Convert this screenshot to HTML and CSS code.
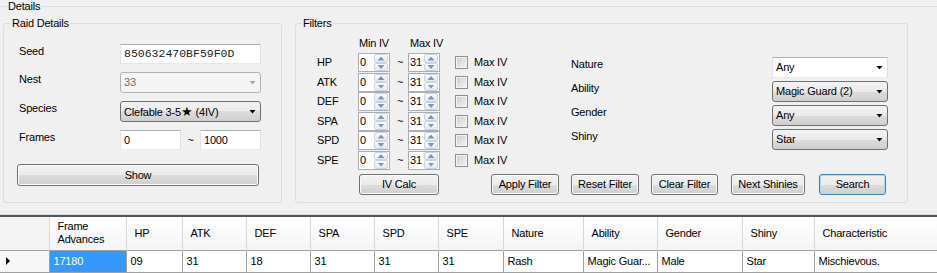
FILE: index.html
```html
<!DOCTYPE html>
<html lang="en">
<head>
    <meta charset="UTF-8">
    <meta name="viewport" content="width=device-width, initial-scale=1.0">
    <title>Raid Generator</title>
    <link rel="stylesheet" href="styles.css">
</head>
<body>
    <fieldset class="group details">
        <legend>Details</legend>
        <div class="details-body">
            <fieldset class="group raid">
                <legend>Raid Details</legend>
                <div class="raid-body">
                    <div class="field">
                        <span class="field-label">Seed</span>
                        <div class="textbox seed">850632470BF59F0D</div>
                    </div>
                    <div class="field">
                        <span class="field-label">Nest</span>
                        <div class="combo disabled"><span class="combo-text">33</span></div>
                    </div>
                    <div class="field">
                        <span class="field-label">Species</span>
                        <div class="combo"><span class="combo-text">Clefable 3-5<span class="star">★</span> (4IV)</span></div>
                    </div>
                    <div class="field">
                        <span class="field-label">Frames</span>
                        <div class="textbox frame">0</div>
                        <span class="range-sep">~</span>
                        <div class="textbox frame">1000</div>
                    </div>
                    <button class="btn show">Show</button>
                </div>
            </fieldset>

            <fieldset class="group filters">
                <legend>Filters</legend>
                <div class="filters-body">
                    <div class="filters-top">
                        <div class="stats">
                            <div class="stats-head"><span>Min IV</span><span>Max IV</span></div>
                            <div class="stat-row">
                                <span class="stat-name">HP</span>
                                <div class="spin"><span class="spin-val">0</span><span class="spin-btns"><i class="up"></i><i class="down"></i></span></div>
                                <span class="tilde">~</span>
                                <div class="spin"><span class="spin-val">31</span><span class="spin-btns"><i class="up"></i><i class="down"></i></span></div>
                                <span class="check"></span><span class="check-label">Max IV</span>
                            </div>
                            <div class="stat-row">
                                <span class="stat-name">ATK</span>
                                <div class="spin"><span class="spin-val">0</span><span class="spin-btns"><i class="up"></i><i class="down"></i></span></div>
                                <span class="tilde">~</span>
                                <div class="spin"><span class="spin-val">31</span><span class="spin-btns"><i class="up"></i><i class="down"></i></span></div>
                                <span class="check"></span><span class="check-label">Max IV</span>
                            </div>
                            <div class="stat-row">
                                <span class="stat-name">DEF</span>
                                <div class="spin"><span class="spin-val">0</span><span class="spin-btns"><i class="up"></i><i class="down"></i></span></div>
                                <span class="tilde">~</span>
                                <div class="spin"><span class="spin-val">31</span><span class="spin-btns"><i class="up"></i><i class="down"></i></span></div>
                                <span class="check"></span><span class="check-label">Max IV</span>
                            </div>
                            <div class="stat-row">
                                <span class="stat-name">SPA</span>
                                <div class="spin"><span class="spin-val">0</span><span class="spin-btns"><i class="up"></i><i class="down"></i></span></div>
                                <span class="tilde">~</span>
                                <div class="spin"><span class="spin-val">31</span><span class="spin-btns"><i class="up"></i><i class="down"></i></span></div>
                                <span class="check"></span><span class="check-label">Max IV</span>
                            </div>
                            <div class="stat-row">
                                <span class="stat-name">SPD</span>
                                <div class="spin"><span class="spin-val">0</span><span class="spin-btns"><i class="up"></i><i class="down"></i></span></div>
                                <span class="tilde">~</span>
                                <div class="spin"><span class="spin-val">31</span><span class="spin-btns"><i class="up"></i><i class="down"></i></span></div>
                                <span class="check"></span><span class="check-label">Max IV</span>
                            </div>
                            <div class="stat-row">
                                <span class="stat-name">SPE</span>
                                <div class="spin"><span class="spin-val">0</span><span class="spin-btns"><i class="up"></i><i class="down"></i></span></div>
                                <span class="tilde">~</span>
                                <div class="spin"><span class="spin-val">31</span><span class="spin-btns"><i class="up"></i><i class="down"></i></span></div>
                                <span class="check"></span><span class="check-label">Max IV</span>
                            </div>
                        </div>

                        <div class="options">
                            <div class="option">
                                <span class="option-label">Nature</span>
                                <div class="combo editable"><span class="combo-text">Any</span></div>
                            </div>
                            <div class="option">
                                <span class="option-label">Ability</span>
                                <div class="combo"><span class="combo-text">Magic Guard (2)</span></div>
                            </div>
                            <div class="option">
                                <span class="option-label">Gender</span>
                                <div class="combo"><span class="combo-text">Any</span></div>
                            </div>
                            <div class="option">
                                <span class="option-label">Shiny</span>
                                <div class="combo"><span class="combo-text">Star</span></div>
                            </div>
                        </div>
                    </div>

                    <div class="filter-buttons">
                        <button class="btn iv-calc">IV Calc</button>
                        <button class="btn apply">Apply Filter</button>
                        <button class="btn reset">Reset Filter</button>
                        <button class="btn clear">Clear Filter</button>
                        <button class="btn next">Next Shinies</button>
                        <button class="btn search">Search</button>
                    </div>
                </div>
            </fieldset>
        </div>
    </fieldset>

    <table class="grid">
        <colgroup>
            <col style="width: 49px">
            <col style="width: 77px">
            <col style="width: 56px">
            <col style="width: 64px">
            <col style="width: 64px">
            <col style="width: 64px">
            <col style="width: 64px">
            <col style="width: 65px">
            <col style="width: 80px">
            <col style="width: 74px">
            <col style="width: 85px">
            <col style="width: 72px">
            <col style="width: 123px">
        </colgroup>
        <thead>
            <tr>
                <th class="corner"></th>
                <th>Frame Advances</th>
                <th>HP</th>
                <th>ATK</th>
                <th>DEF</th>
                <th>SPA</th>
                <th>SPD</th>
                <th>SPE</th>
                <th>Nature</th>
                <th>Ability</th>
                <th>Gender</th>
                <th>Shiny</th>
                <th>Characteristic</th>
            </tr>
        </thead>
        <tbody>
            <tr>
                <td class="row-head"><span class="row-arrow"></span></td>
                <td class="selected">17180</td>
                <td>09</td>
                <td>31</td>
                <td>18</td>
                <td>31</td>
                <td>31</td>
                <td>31</td>
                <td>Rash</td>
                <td>Magic Guar...</td>
                <td>Male</td>
                <td>Star</td>
                <td>Mischievous.</td>
            </tr>
        </tbody>
    </table>
</body>
</html>
```

FILE: styles.css
```css
* {
    box-sizing: border-box;
}

body {
    margin: 0;
    width: 937px;
    height: 273px;
    overflow: hidden;
    background-color: #f0f0f0;
    color: #000;
    font-family: "Liberation Sans", Arial, sans-serif;
    font-size: 11px;
    line-height: 13px;
    letter-spacing: -0.2px;
}

/* group boxes */
.group {
    margin: 0;
    padding: 0;
    min-width: 0;
    border: 1px solid #d5dfe5;
    border-radius: 3px;
}

.group > legend {
    margin-left: 7px;
    padding: 0 1px;
    line-height: 13px;
}

.details {
    margin: 0 -4px 0 -2px;
    border-radius: 0;
}

.details > legend {
    margin-left: 8px;
}

.details-body {
    display: flex;
    gap: 13px;
    padding: 4px 0 11px 4px;
}

.raid {
    width: 279px;
}

.filters {
    width: 613px;
}

.filters > legend {
    margin-left: 6px;
}

/* raid details */
.raid-body {
    display: flex;
    flex-direction: column;
    gap: 8px;
    padding: 14px 0 16px 15px;
}

.field {
    display: flex;
    align-items: flex-start;
}

.field-label {
    width: 101px;
    padding-top: 1px;
}

.textbox {
    height: 20px;
    background-color: #fff;
    border: 1px solid;
    border-color: #abadb3 #dbdfe6 #e3e9ef #e2e3ea;
    padding: 0 3px;
    line-height: 18px;
    white-space: nowrap;
}

.seed {
    width: 141px;
    font-family: "Liberation Mono", "Courier New", monospace;
    font-size: 11.5px;
    letter-spacing: 0;
    color: #222;
}

.frame {
    width: 61px;
}

.range-sep {
    width: 19px;
    text-align: center;
    line-height: 20px;
}

.combo {
    display: flex;
    align-items: center;
    width: 141px;
    height: 21px;
    padding-left: 3px;
    border: 1px solid #707070;
    border-radius: 3px;
    background: linear-gradient(#f2f2f2 0%, #ebebeb 50%, #dddddd 50%, #cfcfcf 100%);
    white-space: nowrap;
}

.combo::after {
    content: "";
    flex: none;
    margin-left: auto;
    margin-right: 4px;
    width: 7px;
    height: 4px;
    background-color: #000;
    clip-path: polygon(0 0, 100% 0, 50% 100%);
}

.star {
    font-size: 13px;
}

.combo.disabled {
    background: #f4f4f4;
    border-color: #adb2b5;
    color: #6d6d6d;
}

.combo.disabled::after {
    background-color: #a7a7a7;
}

.combo.editable {
    background: #fff;
    border-radius: 0;
    border-color: #abadb3 #dbdfe6 #e3e9ef #e2e3ea;
}

.btn {
    height: 21px;
    padding: 0;
    border: 1px solid #707070;
    border-radius: 3px;
    background: linear-gradient(#f2f2f2 0%, #ebebeb 50%, #dddddd 50%, #cfcfcf 100%);
    box-shadow: inset 0 0 0 1px #fbfbfb;
    color: #000;
    font: inherit;
    letter-spacing: inherit;
    text-align: center;
}

.show {
    width: 242px;
    height: 22px;
    margin: 6px 0 0 -2px;
}

/* filters */
.filters-body {
    padding: 7px 0 7px 21px;
}

.filters-top {
    display: flex;
}

.stats {
    width: 254px;
}

.stats-head {
    display: flex;
    height: 13px;
    margin-bottom: 3px;
}

.stats-head span:first-child {
    margin-left: 42px;
    width: 51px;
}

.stat-row {
    display: flex;
    align-items: center;
    height: 19.5px;
}

.stat-name {
    width: 41px;
}

.spin {
    display: flex;
    width: 32px;
    height: 19px;
    background-color: #fff;
    border: 1px solid #abadb3;
}

.spin-val {
    flex: 1;
    padding-left: 1px;
    line-height: 17px;
}

.spin-btns {
    display: flex;
    flex-direction: column;
    width: 14px;
    margin-right: 1px;
}

.spin-btns i {
    flex: 1;
    display: flex;
    align-items: center;
    justify-content: center;
    border: 1px solid #c9d3df;
    border-radius: 2px;
    background: linear-gradient(#f8fafc, #e4eaf1);
}

.spin-btns i::after {
    content: "";
    width: 7px;
    height: 4px;
    background-color: #7e93b8;
}

.spin-btns .up::after {
    clip-path: polygon(50% 0, 100% 100%, 0 100%);
}

.spin-btns .down::after {
    clip-path: polygon(0 0, 100% 0, 50% 100%);
}

.tilde {
    width: 18px;
    padding-left: 7px;
}

.check {
    width: 13px;
    height: 13px;
    margin-left: 15px;
    border: 1px solid #8e8f8f;
    background: linear-gradient(135deg, #c9cbce, #f6f6f6);
    box-shadow: inset 0 0 0 1px #f4f4f4;
}

.check-label {
    margin-left: 6px;
}

.options {
    display: flex;
    flex-direction: column;
    gap: 3px;
    padding-top: 20px;
}

.option {
    display: flex;
    align-items: flex-start;
}

.option-label {
    width: 201px;
    padding-top: 1px;
}

.option .combo {
    width: 116px;
}

.filter-buttons {
    display: flex;
    margin-top: 4px;
}

.iv-calc { width: 80px; margin-left: 42px; }
.apply   { width: 68px; margin-left: 52px; }
.reset   { width: 68px; margin-left: 12px; }
.clear   { width: 67px; margin-left: 12px; }
.next    { width: 74px; margin-left: 13px; }
.search  {
    width: 67px;
    margin-left: 14px;
    border-color: #3c7fb1;
    box-shadow: inset 0 0 0 1px #a9def8;
}

/* results grid */
.grid {
    width: 937px;
    margin-top: 0;
    border-collapse: collapse;
    table-layout: fixed;
    border-top: 2px solid #555;
}

.grid th {
    height: 34px;
    padding: 0 0 0 8px;
    text-align: left;
    font-weight: normal;
    background: linear-gradient(#ffffff, #f3f4f6);
    border-right: 1px solid #d8d8d8;
}

.grid th.corner {
    background: #f4f4f4;
}

.grid td {
    height: 22px;
    padding: 0 0 0 4px;
    background-color: #fff;
    border: 1px solid #a0a0a0;
    white-space: nowrap;
    overflow: hidden;
}

.grid td.row-head {
    background-color: #f7f7f7;
    border-left: none;
    padding-left: 6px;
}

.row-arrow {
    display: block;
    width: 4px;
    height: 8px;
    background-color: #000;
    clip-path: polygon(0 0, 100% 50%, 0 100%);
}

.grid td.selected {
    background-color: #3399ff;
    color: #fff;
}
```
